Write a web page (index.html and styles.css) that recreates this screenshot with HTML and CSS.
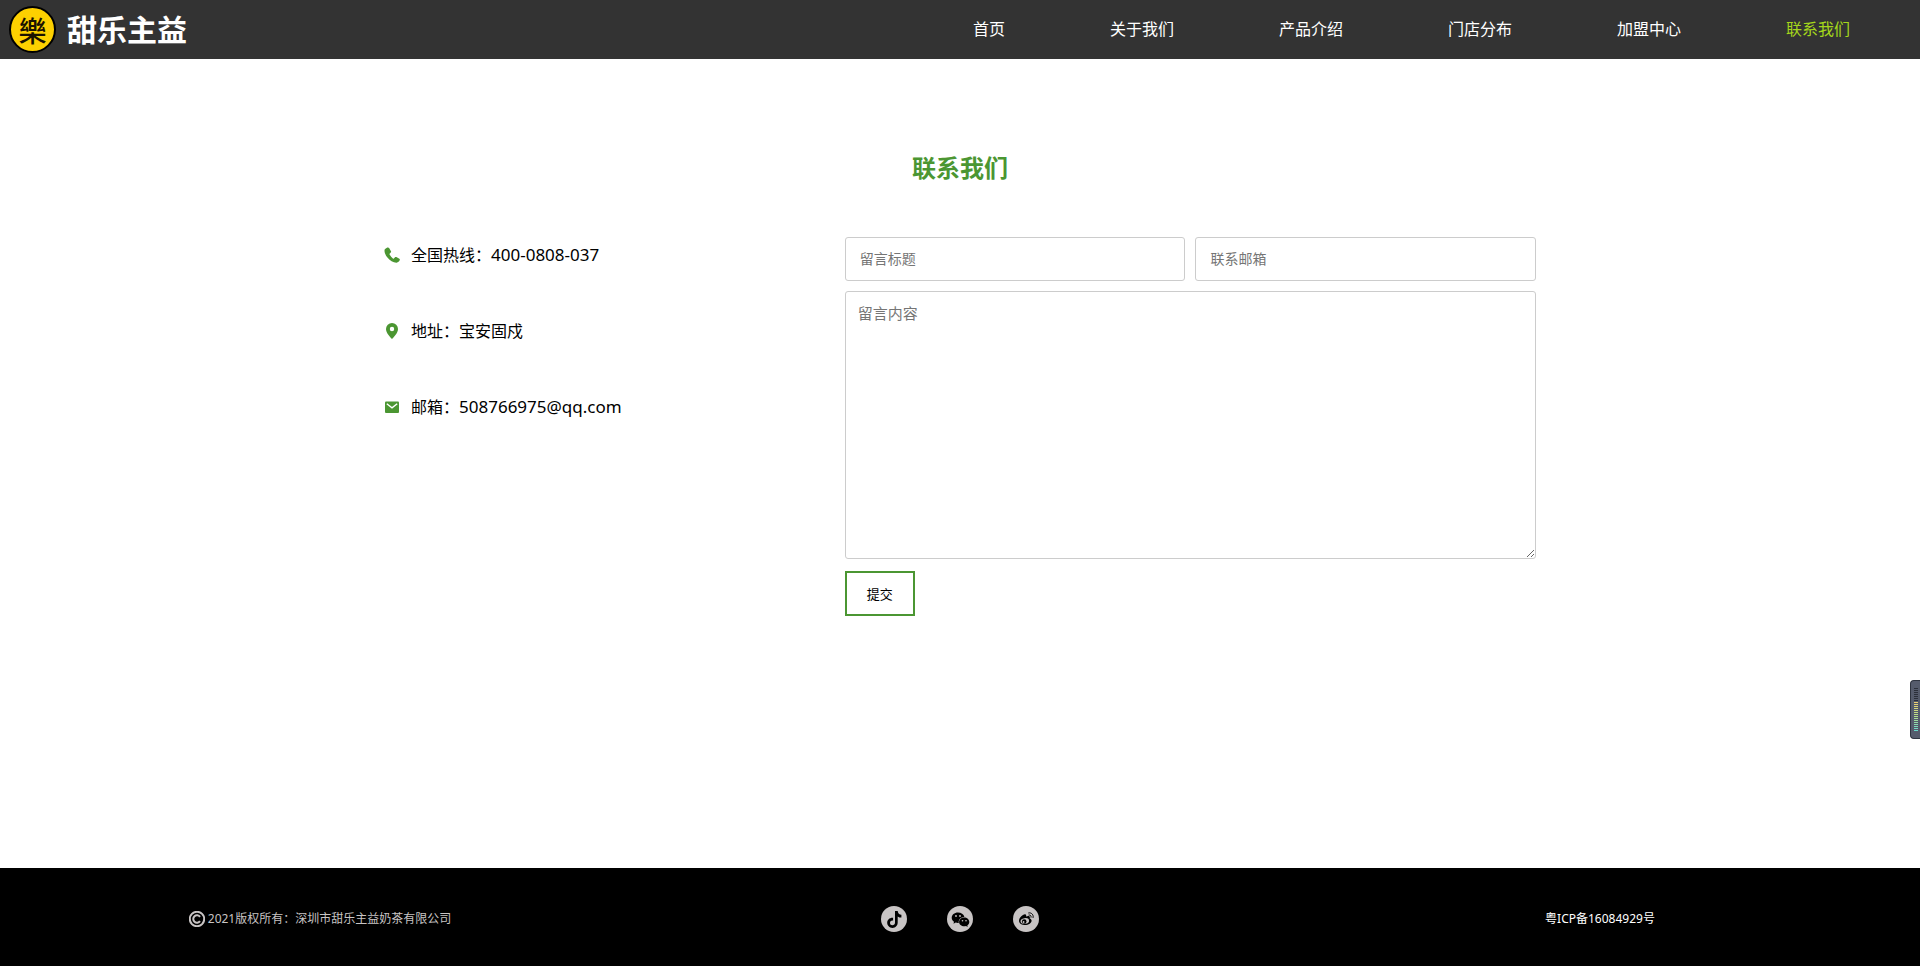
FILE: index.html
```html
<!DOCTYPE html>
<html lang="zh-CN">
<head>
  <meta charset="utf-8">
  <meta name="viewport" content="width=device-width, initial-scale=1">
  <title>联系我们</title>
  <link rel="stylesheet" href="styles.css">
</head>
<body>
  <header class="header">
    <a class="brand" href="#">
      <span class="brand-mark">樂</span>
      <span class="brand-name">甜乐主益</span>
    </a>
    <nav class="nav">
      <a href="#">首页</a>
      <a href="#">关于我们</a>
      <a href="#">产品介绍</a>
      <a href="#">门店分布</a>
      <a href="#">加盟中心</a>
      <a class="active" href="#">联系我们</a>
    </nav>
  </header>

  <main class="main">
    <h1 class="title">联系我们</h1>
    <div class="contact">
      <ul class="info">
        <li>
          <svg class="info-icon" viewBox="0 0 16 16" aria-hidden="true"><path d="M3.300 0.600 1 2C-.1 3.500.6 7 3.200 10.300S9.500 15.800 12.600 15.700c1.500-.1 2.600-1.100 3.200-2.600.2-.6 0-1.100-.4-1.400l-3.100-1.700c-.5-.2-1-.1-1.300.2l-1.100 1.200c-.3.3-.7.300-1 .1C7.700 10.500 6.500 9.100 5.600 7.500c-.2-.4-.1-.8.2-1l.9-.9c.4-.4.5-.9.300-1.300L5.100 1C4.700.4 3.900.2 3.300.6Z"/></svg>
          <span>全国热线：<span class="latin">400-0808-037</span></span>
        </li>
        <li>
          <svg class="info-icon" viewBox="0 0 16 16" aria-hidden="true"><path fill-rule="evenodd" d="M8 0a6 6 0 0 0-6 6c0 4.200 4.200 8 6 10 1.800-2 6-5.800 6-10a6 6 0 0 0-6-6Zm0 3.800a2.200 2.200 0 1 1 0 4.400 2.200 2.200 0 0 1 0-4.400Z"/></svg>
          <span>地址：宝安固戍</span>
        </li>
        <li>
          <svg class="info-icon" viewBox="0 0 16 16" aria-hidden="true"><rect x="1" y="2.500" width="14" height="11.500" rx="1"/><path d="M2.800 4.800 8 8.800l5.200-4" fill="none" stroke="#fff" stroke-width="1.400"/></svg>
          <span>邮箱：<span class="latin">508766975@qq.com</span></span>
        </li>
      </ul>
      <form class="form">
        <input class="field" type="text" placeholder="留言标题" aria-label="留言标题">
        <input class="field" type="email" placeholder="联系邮箱" aria-label="联系邮箱">
        <textarea class="field message" placeholder="留言内容" aria-label="留言内容"></textarea>
        <button class="submit" type="button">提交</button>
      </form>
    </div>
  </main>

  <footer class="footer">
    <p class="copyright">
      <svg class="copy-icon" viewBox="0 0 16 16" aria-hidden="true"><circle cx="8" cy="8" r="7.200"/><path d="M11 5.900A3.700 3.700 0 1 0 11 10.100"/></svg>
      <span>2021版权所有：深圳市甜乐主益奶茶有限公司</span>
    </p>
    <div class="social">
      <a href="#" aria-label="抖音">
        <svg viewBox="0 0 26 26"><circle class="disc" cx="13" cy="13" r="13"/><path d="M14 5h2.700c.2 2.200 1.600 3.600 3.700 3.800v2.800c-1.400 0-2.600-.4-3.700-1.200v6.200c0 3.100-2.200 5.300-5.200 5.300-3.100 0-5.300-2.300-5.300-5.100 0-3.100 2.700-5.400 5.900-5v2.900c-1.700-.4-3.100.6-3.100 2.200 0 1.300 1 2.300 2.400 2.300 1.500 0 2.600-1 2.600-2.700Z"/></svg>
      </a>
      <a href="#" aria-label="微信">
        <svg viewBox="0 0 26 26"><circle class="disc" cx="13" cy="13" r="13"/><path d="M10.900 6.500C7.400 6.500 4.700 8.800 4.700 11.700c0 1.700.9 3.100 2.300 4.100l-.5 2 2.200-1.200c1 .3 2 .4 3.100.3-.7-3.300 2-6 5.600-6-.6-2.600-3.300-4.400-6.500-4.400Z"/><path d="M22.300 16c0-2.500-2.300-4.400-5.100-4.400s-5.100 1.900-5.100 4.400 2.300 4.300 5.100 4.300c.6 0 1.200-.1 1.800-.3l1.700 1-.4-1.600c1.200-.8 2-2 2-3.400Z"/><g class="disc"><circle cx="9" cy="10" r=".9"/><circle cx="13" cy="10" r=".9"/><circle cx="15.500" cy="14.700" r=".8"/><circle cx="19" cy="14.700" r=".8"/></g></svg>
      </a>
      <a href="#" aria-label="微博">
        <svg viewBox="0 0 26 26"><circle class="disc" cx="13" cy="13" r="13"/><path d="M16.700 12.500c.4-1.200.2-2-.5-2.300-.8-.4-2-.2-3.200.4.400-1.300.2-2-.4-2.200-1.300-.5-3.900 1.100-5.400 3.200-2.600 3.600-.8 7.500 4.400 7.500 4.200 0 7-2.300 7-4.300 0-1.100-.7-1.900-1.900-2.300Z"/><ellipse class="disc" cx="11.800" cy="15" rx="4.300" ry="2.900" transform="rotate(-8 11.800 15)"/><circle cx="11.200" cy="15.500" r="2.300"/><circle class="disc" cx="10.600" cy="16" r=".9"/><path class="wave" d="M15.600 9.100c1.700-.4 2.900.9 2.400 2.500M15.300 7c3-.8 5.600 1.800 4.700 4.900"/></svg>
      </a>
    </div>
    <p class="record"><a href="#">粤ICP备16084929号</a></p>
  </footer>

  <aside class="meter" aria-hidden="true"><span class="meter-bars"></span></aside>
</body>
</html>
```
FILE: styles.css
```css
* {
  box-sizing: border-box;
  margin: 0;
  padding: 0;
}

body {
  display: flex;
  flex-direction: column;
  min-height: 100vh;
  background: #fff;
  color: #000;
  font: 16px/24px "Noto Sans", "Noto Sans CJK SC", sans-serif;
}

a {
  color: inherit;
  text-decoration: none;
}

.header {
  display: flex;
  align-items: center;
  justify-content: space-between;
  height: 59px;
  padding: 0 70px 0 9px;
  background: #333;
  color: #fff;
}

.brand {
  display: flex;
  align-items: center;
  gap: 11px;
}

.brand-mark {
  display: flex;
  align-items: center;
  justify-content: center;
  width: 47px;
  height: 47px;
  border: 2px solid #000;
  border-radius: 50%;
  background: #fdd000;
  color: #1a1200;
  font: 500 28px/28px "Noto Sans CJK TC", sans-serif;
}

.brand-name {
  padding-bottom: 4px;
  font: 700 30px/40px "Noto Sans CJK SC", sans-serif;
}

.nav {
  display: flex;
  gap: 105px;
  padding-bottom: 2px;
}

.nav .active {
  color: #a5d61b;
}

.main {
  flex: 1;
  width: 60%;
  margin: 0 auto;
  padding: 90px 0 80px;
}

.title {
  color: #4b9632;
  font-size: 24px;
  line-height: 38px;
  text-align: center;
}

.contact {
  display: flex;
  margin-top: 50px;
}

.info {
  display: flex;
  flex-direction: column;
  gap: 52px;
  width: 40%;
  padding-top: 6px;
  list-style: none;
}

.info li {
  display: flex;
  align-items: center;
  gap: 11px;
}

.info-icon {
  width: 16px;
  height: 16px;
  fill: #4b9632;
}

.latin {
  font-size: 17px;
}

.form {
  display: grid;
  grid-template-columns: 1fr 1fr;
  gap: 10px;
  width: 60%;
}

.field {
  width: 100%;
  height: 44px;
  padding: 0 14px 2px;
  border: 1px solid #ccc;
  border-radius: 3px;
  background: #fff;
  color: #333;
  font: 14px/20px "Noto Sans", "Noto Sans CJK SC", sans-serif;
}

.field::placeholder {
  color: #757575;
}

.message {
  grid-column: 1 / -1;
  height: 268px;
  padding: 11px 12px;
  font-size: 15px;
}

.submit {
  width: 70px;
  height: 45px;
  margin-top: 2px;
  border: 2px solid #4b9632;
  background: #fff;
  color: #000;
  font: 13px/20px "Noto Sans", "Noto Sans CJK SC", sans-serif;
}

.footer {
  display: grid;
  grid-template-columns: repeat(3, 1fr);
  align-items: center;
  justify-items: center;
  height: 98px;
  padding-top: 3px;
  background: #000;
  color: #c8c4c4;
  font-size: 12px;
}

.copyright {
  display: flex;
  align-items: center;
  gap: 3px;
}

.copy-icon {
  width: 16px;
  height: 16px;
  fill: none;
  stroke: #c8c4c4;
  stroke-width: 2;
}

.social {
  display: flex;
  gap: 40px;
}

.social svg {
  display: block;
  width: 26px;
  height: 26px;
}

.disc {
  fill: #c8c4c4;
}

.wave {
  fill: none;
  stroke: #000;
  stroke-width: 1;
}

.record {
  color: #fff;
}

.meter {
  position: fixed;
  right: 0;
  bottom: 227px;
  display: flex;
  width: 10px;
  height: 59px;
  padding: 7px 2px 6px 3px;
  border: 1px solid #2f3440;
  border-right: 0;
  border-radius: 4px 0 0 4px;
  background: #555b6c;
}

.meter-bars {
  flex: 1;
  background:
    repeating-linear-gradient(transparent 0 1px, #555b6c 1px 2px),
    linear-gradient(#2b2f3a 0 14px, #f0d070 14px, #b5e08a 28px, #62d8d0);
}
```
